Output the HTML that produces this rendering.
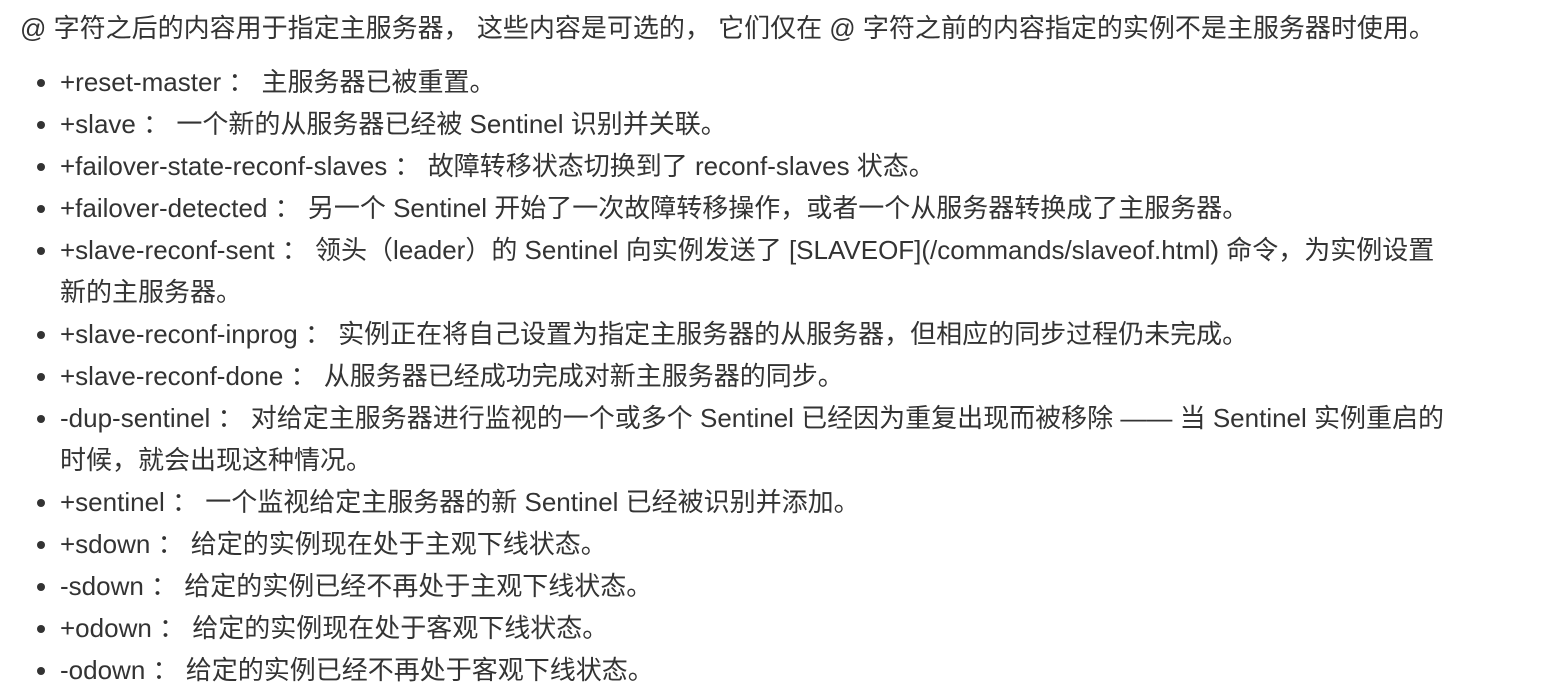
<!DOCTYPE html>
<html><head><meta charset="utf-8"><style>
body{margin:0;background:#fff;color:#333;font-family:"Liberation Sans","Noto Sans CJK SC",sans-serif;font-size:26px;line-height:42px}
p{margin:0;padding:7px 0 0 20px;white-space:nowrap}
ul{margin:12px 0 0 0;padding-left:60px}
li{white-space:nowrap}
</style></head><body>
<p>@ 字符之后的内容用于指定主服务器， 这些内容是可选的， 它们仅在 @ 字符之前的内容指定的实例不是主服务器时使用。</p>
<ul>
<li>+reset-master ： 主服务器已被重置。</li>
<li>+slave ： 一个新的从服务器已经被 Sentinel 识别并关联。</li>
<li>+failover-state-reconf-slaves ： 故障转移状态切换到了 reconf-slaves 状态。</li>
<li>+failover-detected ： 另一个 Sentinel 开始了一次故障转移操作，或者一个从服务器转换成了主服务器。</li>
<li>+slave-reconf-sent ： 领头（leader）的 Sentinel 向实例发送了 [SLAVEOF](/commands/slaveof.html) 命令，为实例设置<br>新的主服务器。</li>
<li>+slave-reconf-inprog ： 实例正在将自己设置为指定主服务器的从服务器，但相应的同步过程仍未完成。</li>
<li>+slave-reconf-done ： 从服务器已经成功完成对新主服务器的同步。</li>
<li>-dup-sentinel ： 对给定主服务器进行监视的一个或多个 Sentinel 已经因为重复出现而被移除 —— 当 Sentinel 实例重启的<br>时候，就会出现这种情况。</li>
<li>+sentinel ： 一个监视给定主服务器的新 Sentinel 已经被识别并添加。</li>
<li>+sdown ： 给定的实例现在处于主观下线状态。</li>
<li>-sdown ： 给定的实例已经不再处于主观下线状态。</li>
<li>+odown ： 给定的实例现在处于客观下线状态。</li>
<li>-odown ： 给定的实例已经不再处于客观下线状态。</li>
</ul>
</body></html>
